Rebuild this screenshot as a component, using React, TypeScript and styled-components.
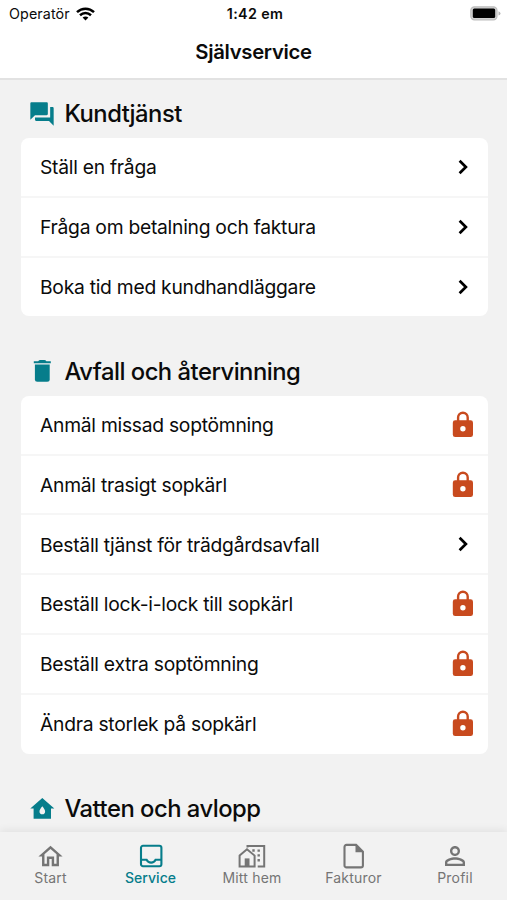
import React from "react";
import styled, { createGlobalStyle } from "styled-components";
import { MdQuestionAnswer, MdOutlineHome, MdPersonOutline } from "react-icons/md";

const TEAL = "#067d8b";
const GREY = "#757575";

const GlobalStyle = createGlobalStyle`
  * { box-sizing: border-box; }
  body { margin: 0; background: #f2f2f2; }
`;

const Screen = styled.div`
  width: 507px;
  height: 900px;
  overflow: hidden;
  display: flex;
  flex-direction: column;
  background: #f2f2f2;
  color: #0b0b0b;
  font-family: Inter, "Liberation Sans", sans-serif;
`;

const Header = styled.header`
  flex: none;
  height: 80px;
  background: #fff;
  border-bottom: 2px solid #e2e2e2;
`;

const StatusBar = styled.div`
  height: 27px;
  padding: 0 6px 0 9px;
  display: grid;
  grid-template-columns: 1fr auto 1fr;
  align-items: center;
`;

const Carrier = styled.div`
  display: flex;
  align-items: center;
  gap: 6px;
  white-space: nowrap;
`;

const FitText = styled.span<{ $size: number; $weight?: number; $track?: number }>`
  margin: 0;
  font-size: ${(p) => p.$size}px;
  font-weight: ${(p) => p.$weight ?? 400};
  letter-spacing: ${(p) => p.$track ?? 0}px;
  line-height: 1.2;
  white-space: nowrap;
`;

const BatterySlot = styled.div`
  display: flex;
  justify-content: flex-end;
`;

const StatusText = styled(FitText)`
  padding-top: 1px;
`;

const TitleRow = styled.div`
  height: 51px;
  display: flex;
  align-items: center;
  justify-content: center;
`;

const Content = styled.main`
  flex: 1;
  min-height: 0;
  overflow: hidden;
  padding: 0 19.5px 0 20.5px;
`;

const Section = styled.section`
  margin-bottom: 21.5px;
`;

const SectionHead = styled.div`
  height: 58px;
  padding: 9px 0 0 7px;
  display: flex;
  align-items: center;
  gap: 9px;
`;

const HeadingText = styled(FitText)`
  padding-top: 2px;
`;

const IconBox = styled.span`
  width: 28px;
  height: 28px;
  display: flex;
  align-items: center;
  justify-content: center;
  color: ${TEAL};
`;

const Card = styled.div`
  background: #fff;
  border-radius: 8px;
  overflow: hidden;
`;

const Row = styled.div`
  height: 59.8px;
  padding: 0 11px 0 19.5px;
  display: flex;
  align-items: center;
  justify-content: space-between;
  border-bottom: 2px solid #f6f6f6;
  &:last-child {
    height: 58.8px;
    border-bottom: 0;
  }
`;

const RowLabel = styled(FitText)`
  padding-top: 1.6px;
`;

const TrailBox = styled.span`
  width: 28px;
  height: 28px;
  display: flex;
`;

const TabBar = styled.nav`
  flex: none;
  height: 68px;
  display: grid;
  grid-template-columns: 101px 99px 104px 99px 104px;
  background: #f2f2f2;
  box-shadow: 0 -2px 8px rgba(0, 0, 0, 0.07);
`;

const Tab = styled.div<{ $active?: boolean }>`
  display: flex;
  flex-direction: column;
  align-items: center;
  padding-top: 10px;
  color: ${(p) => (p.$active ? TEAL : GREY)};
`;

const TabIcon = styled.span`
  height: 28px;
  display: flex;
  align-items: center;
`;

const Wifi = () => (
  <svg width="19" height="14" viewBox="0 0 19 14" fill="none" stroke="#000" strokeWidth="2.5">
    <path d="M1 5.1C5.8.5 13.2.5 18 5.1" />
    <path d="M4 8.2c3.2-2.9 7.8-2.9 11 0" />
    <path d="M6.6 10.6c1.7-1.4 4.1-1.4 5.8 0L9.5 13.5z" fill="#000" stroke="none" />
  </svg>
);

const Battery = () => (
  <svg width="31" height="15" viewBox="0 0 31 15">
    <rect x=".8" y=".8" width="26.2" height="13" rx="3.6" fill="#d2d2d2" stroke="#bdbdbd" strokeWidth="1.2" />
    <rect x="2.8" y="2.6" width="22.4" height="9.4" rx="1.5" fill="#000" />
    <path d="M28.5 5.2q2 .8 2 2.2t-2 2.2z" fill="#b5b5b5" />
  </svg>
);

const Chevron = () => (
  <svg width="28" height="28" viewBox="0 0 28 28" fill="none" stroke="#000" strokeWidth="2.7">
    <path d="M10.6 7.7l6.3 6.3-6.3 6.3" />
  </svg>
);

const Lock = () => (
  <svg width="28" height="28" viewBox="0 0 28 28" fill="#c84a1e">
    <path
      fillRule="evenodd"
      d="M6.2 9.3h15.400a2.400 2.400 0 0 1 2.400 2.400v12a2.400 2.400 0 0 1-2.400 2.400H6.200a2.400 2.400 0 0 1-2.400-2.400v-12a2.400 2.400 0 0 1 2.400-2.400zM13.900 15a2.700 2.700 0 1 0 0 5.400 2.700 2.700 0 0 0 0-5.400z"
    />
    <path d="M9.1 10V6.500a4.800 4.800 0 0 1 9.600 0V10" fill="none" stroke="#c84a1e" strokeWidth="2.4" />
  </svg>
);

const Trash = () => (
  <svg width="28" height="28" viewBox="0 0 28 28" fill={TEAL}>
    <path d="M5.8 4.3h4.4Q11 3 12.300 3h4Q17.600 3 18.400 4.300h4.400v2H5.800z" />
    <path d="M6.900 7.500h14.800v14.700a2.500 2.500 0 0 1-2.500 2.500H9.400a2.500 2.500 0 0 1-2.500-2.500z" />
  </svg>
);

const WaterHouse = () => (
  <svg width="28" height="28" viewBox="0 0 28 28" fill={TEAL}>
    <path
      fillRule="evenodd"
      d="M14.300 3L26.300 13.600H23V23.800H5.600V13.600H2.300zM14.300 11.300c-1.800 2.300-2.800 3.700-2.800 5.100a2.800 2.800 0 0 0 5.600 0c0-1.400-1-2.800-2.800-5.100z"
    />
  </svg>
);

const Inbox = () => (
  <svg width="26" height="26" viewBox="0 0 26 26" fill="none" stroke="currentColor" strokeWidth="2.1">
    <rect x="3" y="2.8" width="20.4" height="20.4" rx="2" />
    <path d="M3 16.8h5.600c.9 1.800 2.500 2.800 4.500 2.800s3.600-1 4.500-2.800h5.800" />
  </svg>
);

const HomeBuilding = () => (
  <svg width="28" height="26" viewBox="0 0 28 26" fill="none" stroke="currentColor" strokeWidth="2">
    <path d="M1.6 12.6L9 6.3l7.600 6.300v10.800h-15z" />
    <path d="M9.500 4.500V3h16.700v20.400h-6.500" />
    <path d="M6.700 23.400v-8h4.800v8z" fill="currentColor" stroke="none" />
    <path d="M15.500 6.200v2.500M20.700 6.400v2.400M20.700 11.200v2.400M20.700 16v2.400" strokeWidth="2.4" />
  </svg>
);

const Document = () => (
  <svg width="26" height="28" viewBox="0 0 26 28">
    <path d="M5.500 2.900h9.600l6.800 6.800v13.700a2 2 0 0 1-2 2H5.500a2 2 0 0 1-2-2V4.900a2 2 0 0 1 2-2z" fill="none" stroke="currentColor" strokeWidth="2.1" />
    <path d="M14.500 2.200v8h8z" fill="currentColor" />
  </svg>
);

type Item = { label: string; locked?: boolean };

const ItemRow = ({ label, locked }: Item) => (
  <Row>
    <RowLabel $size={19.3} $track={-0.27}>{label}</RowLabel>
    <TrailBox>{locked ? <Lock /> : <Chevron />}</TrailBox>
  </Row>
);

const support: Item[] = [
  { label: "Ställ en fråga" },
  { label: "Fråga om betalning och faktura" },
  { label: "Boka tid med kundhandläggare" },
];

const waste: Item[] = [
  { label: "Anmäl missad soptömning", locked: true },
  { label: "Anmäl trasigt sopkärl", locked: true },
  { label: "Beställ tjänst för trädgårdsavfall" },
  { label: "Beställ lock-i-lock till sopkärl", locked: true },
  { label: "Beställ extra soptömning", locked: true },
  { label: "Ändra storlek på sopkärl", locked: true },
];

const Heading = ({ icon, text }: { icon: React.ReactNode; text: string }) => (
  <SectionHead>
    <IconBox>{icon}</IconBox>
    <HeadingText as="h2" $size={23.8} $weight={500} $track={-0.5}>{text}</HeadingText>
  </SectionHead>
);

const tabs = [
  { label: "Start", icon: <MdOutlineHome size={29} /> },
  { label: "Service", icon: <Inbox />, active: true },
  { label: "Mitt hem", icon: <HomeBuilding /> },
  { label: "Fakturor", icon: <Document /> },
  { label: "Profil", icon: <MdPersonOutline size={30} /> },
];

export default function App() {
  return (
    <Screen>
      <GlobalStyle />
      <Header>
        <StatusBar>
          <Carrier>
            <StatusText $size={14.3} $track={0.1}>Operatör</StatusText>
            <Wifi />
          </Carrier>
          <StatusText $size={14.3} $weight={600} $track={0.35}>1:42 em</StatusText>
          <BatterySlot>
            <Battery />
          </BatterySlot>
        </StatusBar>
        <TitleRow>
          <FitText $size={20.3} $weight={600} $track={-0.3}>Självservice</FitText>
        </TitleRow>
      </Header>
      <Content>
        <Section>
          <Heading icon={<MdQuestionAnswer size={30} />} text="Kundtjänst" />
          <Card>{support.map((i) => <ItemRow key={i.label} {...i} />)}</Card>
        </Section>
        <Section>
          <Heading icon={<Trash />} text="Avfall och återvinning" />
          <Card>{waste.map((i) => <ItemRow key={i.label} {...i} />)}</Card>
        </Section>
        <Section>
          <Heading icon={<WaterHouse />} text="Vatten och avlopp" />
        </Section>
      </Content>
      <TabBar>
        {tabs.map((t) => (
          <Tab key={t.label} $active={t.active}>
            <TabIcon>{t.icon}</TabIcon>
            <FitText $size={14} $weight={t.active ? 500 : 400} $track={t.active ? 0.05 : 0.2}>{t.label}</FitText>
          </Tab>
        ))}
      </TabBar>
    </Screen>
  );
}
